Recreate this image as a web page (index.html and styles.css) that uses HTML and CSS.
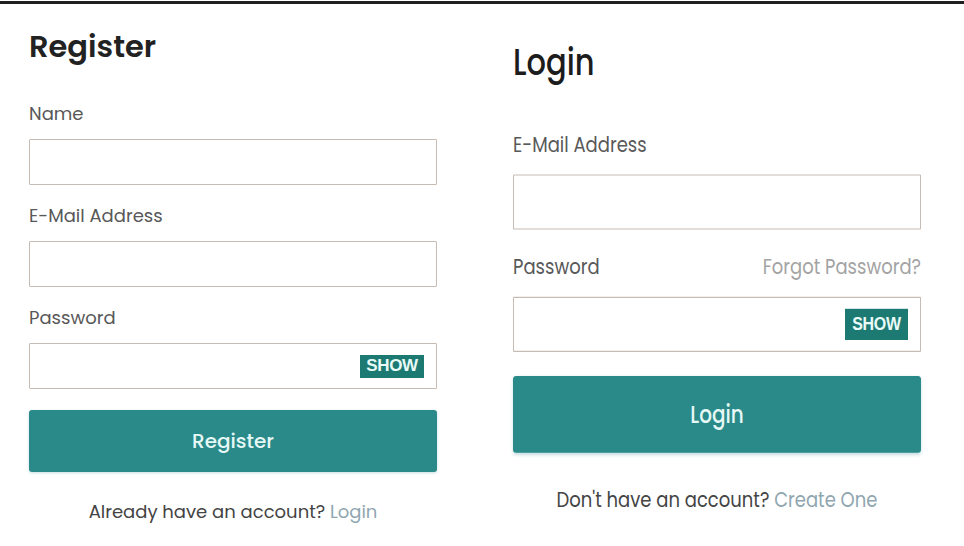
FILE: index.html
```html
<!DOCTYPE html>
<html lang="en">
<head>
<meta charset="utf-8">
<title>Register / Login</title>
<link rel="stylesheet" href="styles.css">
</head>
<body>
<main class="page">
  <form class="panel panel--register">
    <h2 class="panel__title">Register</h2>
    <div class="field">
      <label class="field__label">Name</label>
      <input class="field__input" type="text">
    </div>
    <div class="field">
      <label class="field__label">E-Mail Address</label>
      <input class="field__input" type="email">
    </div>
    <div class="field">
      <label class="field__label">Password</label>
      <div class="field__group">
        <input class="field__bare" type="password">
        <span class="show-btn">SHOW</span>
      </div>
    </div>
    <button class="submit" type="button">Register</button>
    <p class="switch">Already have an account? <a class="switch__link">Login</a></p>
  </form>

  <form class="panel panel--login">
    <h2 class="panel__title">Login</h2>
    <div class="field">
      <label class="field__label">E-Mail Address</label>
      <input class="field__input" type="email">
    </div>
    <div class="field">
      <div class="field__row">
        <label class="field__label">Password</label>
        <a class="forgot">Forgot Password?</a>
      </div>
      <div class="field__group">
        <input class="field__bare" type="password">
        <span class="show-btn show-btn--lg">SHOW</span>
      </div>
    </div>
    <button class="submit submit--lg" type="button">Login</button>
    <p class="switch">Don't have an account? <a class="switch__link">Create One</a></p>
  </form>
</main>
</body>
</html>
```

FILE: styles.css
```css
* { box-sizing: border-box; }

html, body {
  margin: 0;
  background: #ffffff;
}

body {
  padding-top: 1px;
  font-family: "Poppins", "Open Sans", "DejaVu Sans", sans-serif;
  color: #333;
}

.page {
  border-top: 3px solid #1f1f1f;
  display: grid;
  grid-template-columns: 408px 408px;
  column-gap: 76px;
  padding-left: 29px;
  align-items: start;
}

.panel {
  display: flex;
  flex-direction: column;
  margin: 0;
}

.panel--register { padding-top: 24px; }

.panel--login {
  padding-top: 30px;
  transform: scaleY(1.2);
  transform-origin: top left;
}

.panel__title {
  margin: 0 0 36px;
  font-size: 30.5px;
  line-height: 38px;
  font-weight: 600;
  color: #222;
}

.panel--login .panel__title {
  margin-bottom: 37px;
  font-weight: 500;
  color: #1c1c1c;
}

.field {
  display: flex;
  flex-direction: column;
  margin-bottom: 19px;
}

.field:last-of-type { margin-bottom: 0; }

.field__label {
  display: block;
  margin-bottom: 13px;
  font-size: 18px;
  line-height: 24px;
  color: #585858;
}

.field__row {
  display: flex;
  justify-content: space-between;
  align-items: baseline;
  margin-bottom: 13px;
}

.field__row .field__label { margin-bottom: 0; }

.forgot {
  font-size: 18px;
  line-height: 24px;
  color: #a3a3a3;
}

.field__input,
.field__group {
  height: 46px;
  width: 100%;
  border: 1px solid #c6bcb3;
  border-radius: 1px;
  background: #fff;
}

.field__input {
  padding: 0 12px;
  font: inherit;
  outline: none;
}

.field__group {
  display: flex;
  align-items: center;
  padding-right: 12px;
}

.field__bare {
  flex: 1;
  min-width: 0;
  height: 100%;
  border: 0;
  background: transparent;
  outline: none;
}

.show-btn {
  display: flex;
  align-items: center;
  justify-content: center;
  width: 64px;
  height: 23px;
  background: #1d7a72;
  color: #e9fbf8;
  font-family: "Liberation Sans", Arial, sans-serif;
  font-weight: 700;
  font-size: 17px;
  letter-spacing: -0.3px;
}

.show-btn--lg {
  width: 63px;
  height: 26px;
  font-size: 16px;
}

.submit {
  margin-top: 21px;
  height: 62px;
  width: 100%;
  border: 0;
  border-radius: 3px;
  background: #2a8a89;
  color: #e6f8f6;
  font-family: inherit;
  font-size: 20px;
  font-weight: 500;
  box-shadow: 0 1px 3px rgba(40, 120, 140, 0.25);
}

.submit--lg {
  margin-top: 20px;
  height: 64px;
}

.switch {
  margin: 28px 0 0;
  text-align: center;
  font-size: 18px;
  line-height: 24px;
  color: #444;
}

.panel--login .switch { margin-top: 27px; }

.switch__link {
  color: #8fa6b0;
}
```
